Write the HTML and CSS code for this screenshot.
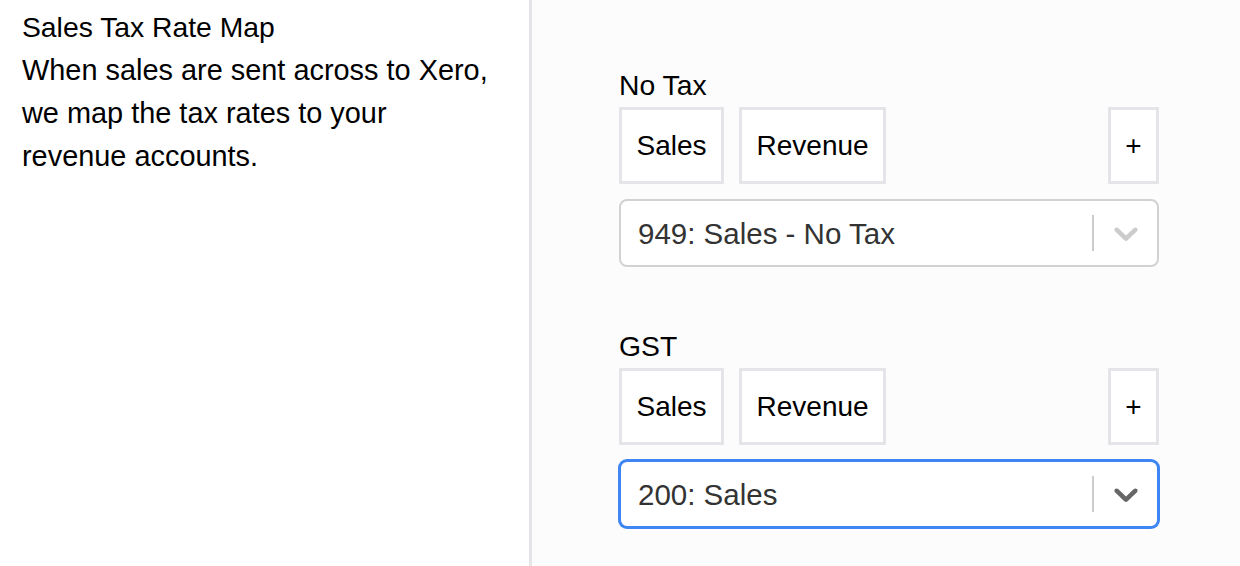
FILE: index.html
```html
<!DOCTYPE html>
<html lang="en">
<head>
<meta charset="utf-8">
<title>Sales Tax Rate Map</title>
<link rel="stylesheet" href="styles.css">
</head>
<body>
<div class="page">
  <aside class="intro">
    <div class="intro-title">Sales Tax Rate Map</div>
    <div class="intro-text">When sales are sent across to Xero, we map the tax rates to your revenue accounts.</div>
  </aside>
  <main class="mapping">
    <section class="rate">
      <div class="rate-label">No Tax</div>
      <div class="rate-tabs">
        <button class="tab">Sales</button>
        <button class="tab">Revenue</button>
        <button class="tab tab-add">+</button>
      </div>
      <div class="select">
        <div class="select-value">949: Sales - No Tax</div>
        <span class="select-sep"></span>
        <span class="select-ind">
          <svg viewBox="0 0 20 20" width="40" height="40" aria-hidden="true"><path d="M4.516 7.548c0.436-0.446 1.043-0.481 1.576 0l3.908 3.747 3.908-3.747c0.533-0.481 1.141-0.446 1.574 0 0.436 0.445 0.408 1.197 0 1.615-0.406 0.418-4.695 4.502-4.695 4.502-0.217 0.223-0.502 0.335-0.787 0.335s-0.57-0.112-0.789-0.335c0 0-4.287-4.084-4.695-4.502s-0.436-1.17 0-1.615z"/></svg>
        </span>
      </div>
    </section>
    <section class="rate">
      <div class="rate-label">GST</div>
      <div class="rate-tabs">
        <button class="tab">Sales</button>
        <button class="tab">Revenue</button>
        <button class="tab tab-add">+</button>
      </div>
      <div class="select select-focused">
        <div class="select-value">200: Sales</div>
        <span class="select-sep"></span>
        <span class="select-ind">
          <svg viewBox="0 0 20 20" width="40" height="40" aria-hidden="true"><path d="M4.516 7.548c0.436-0.446 1.043-0.481 1.576 0l3.908 3.747 3.908-3.747c0.533-0.481 1.141-0.446 1.574 0 0.436 0.445 0.408 1.197 0 1.615-0.406 0.418-4.695 4.502-4.695 4.502-0.217 0.223-0.502 0.335-0.787 0.335s-0.57-0.112-0.789-0.335c0 0-4.287-4.084-4.695-4.502s-0.436-1.17 0-1.615z"/></svg>
        </span>
      </div>
    </section>
  </main>
</div>
</body>
</html>
```
FILE: styles.css
```css
html, body {
  margin: 0;
  padding: 0;
  background: #ffffff;
}
body {
  font-family: "Liberation Sans", Arial, Helvetica, sans-serif;
  font-size: 28px;
  line-height: 43px;
  color: #000;
}
.page {
  display: flex;
  min-height: 100vh;
}
.intro {
  width: 532px;
  box-sizing: border-box;
  padding: 6px 40px 0 22px;
  border-right: 3px solid #e4e4e9;
  background: #ffffff;
}
.intro-title {
  font-size: 28.3px;
}
.intro-text {
  font-size: 28.9px;
}
.mapping {
  flex: 1;
  background: #fcfcfc;
  padding: 64px 0 0 87px;
  display: flex;
  flex-direction: column;
  gap: 58px;
}
.rate {
  width: 540px;
  display: flex;
  flex-direction: column;
}
.rate-label {
  font-size: 28.3px;
}
.rate-tabs {
  display: flex;
  gap: 15px;
  height: 77px;
  margin-bottom: 15px;
}
.tab {
  font: inherit;
  color: #000;
  background: #fff;
  border: 3px solid #e4e4e9;
  border-radius: 0;
  padding: 0 14.5px;
  margin: 0;
  display: flex;
  align-items: center;
  cursor: pointer;
}
.tab-add {
  margin-left: auto;
}
.select {
  box-sizing: border-box;
  height: 68px;
  border: 2px solid #d2d2d2;
  border-radius: 8px;
  background: #fff;
  display: flex;
  align-items: center;
}
.select-focused {
  border-color: #3d86f4;
  box-shadow: 0 0 0 1px #3d86f4;
}
.select-value {
  flex: 1;
  padding-left: 17px;
  color: #333333;
  font-size: 29.5px;
}
.select-sep {
  width: 2px;
  height: 36px;
  background: #cccccc;
}
.select-ind {
  width: 63px;
  display: flex;
  align-items: center;
  justify-content: center;
}
.select-ind svg {
  fill: #cccccc;
  display: block;
}
.select-focused .select-ind svg {
  fill: #666666;
}
```
